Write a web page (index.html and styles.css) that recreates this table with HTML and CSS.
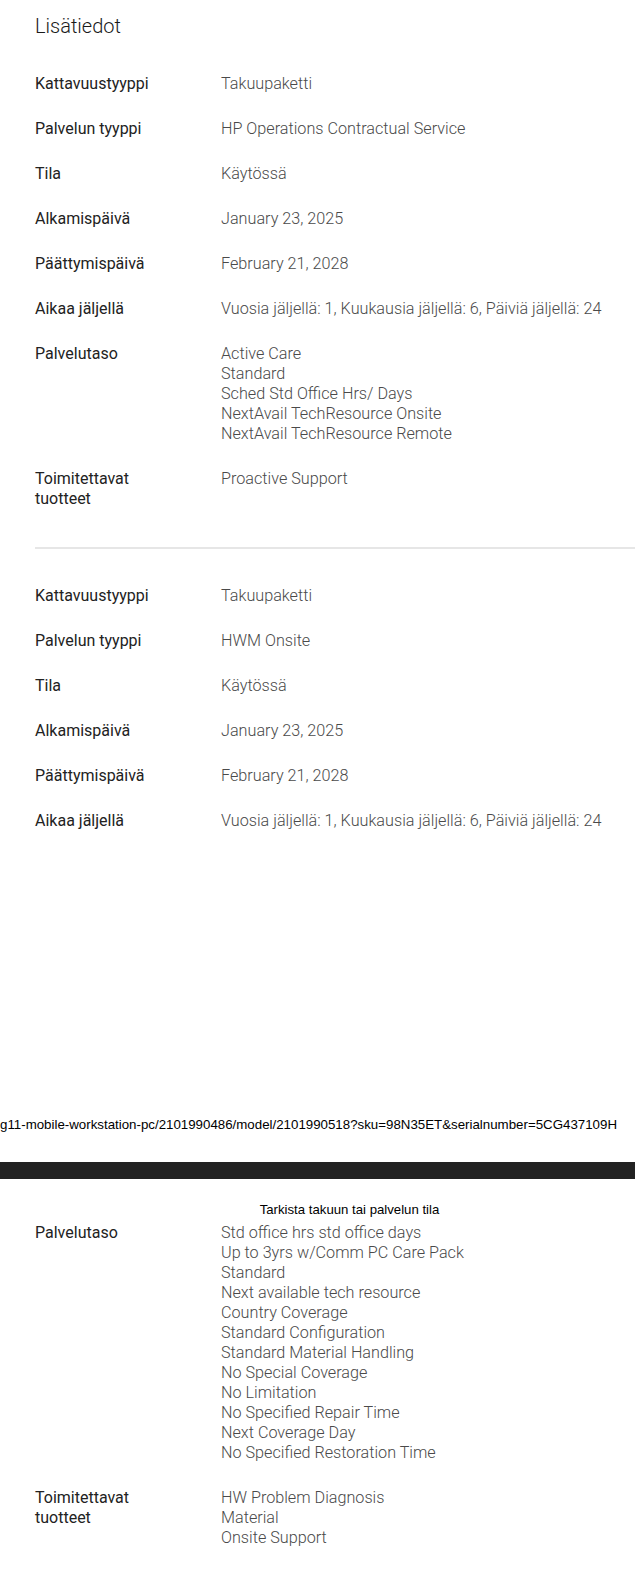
FILE: index.html
```html
<!DOCTYPE html>
<html lang="fi">
<head>
<meta charset="utf-8">
<title>Lisätiedot</title>
<link rel="stylesheet" href="styles.css">
</head>
<body>
<div class="page">
  <h1 class="title">Lisätiedot</h1>

  <dl class="group">
    <dt>Kattavuustyyppi</dt><dd>Takuupaketti</dd>
    <dt>Palvelun tyyppi</dt><dd>HP Operations Contractual Service</dd>
    <dt>Tila</dt><dd>Käytössä</dd>
    <dt>Alkamispäivä</dt><dd>January 23, 2025</dd>
    <dt>Päättymispäivä</dt><dd>February 21, 2028</dd>
    <dt>Aikaa jäljellä</dt><dd>Vuosia jäljellä: 1, Kuukausia jäljellä: 6, Päiviä jäljellä: 24</dd>
    <dt>Palvelutaso</dt><dd>Active Care<br>Standard<br>Sched Std Office Hrs/ Days<br>NextAvail TechResource Onsite<br>NextAvail TechResource Remote</dd>
    <dt>Toimitettavat<br>tuotteet</dt><dd>Proactive Support</dd>
  </dl>

  <hr class="divider">

  <dl class="group">
    <dt>Kattavuustyyppi</dt><dd>Takuupaketti</dd>
    <dt>Palvelun tyyppi</dt><dd>HWM Onsite</dd>
    <dt>Tila</dt><dd>Käytössä</dd>
    <dt>Alkamispäivä</dt><dd>January 23, 2025</dd>
    <dt>Päättymispäivä</dt><dd>February 21, 2028</dd>
    <dt>Aikaa jäljellä</dt><dd>Vuosia jäljellä: 1, Kuukausia jäljellä: 6, Päiviä jäljellä: 24</dd>
  </dl>
</div>

<div class="print-footer">g11-mobile-workstation-pc/2101990486/model/2101990518?sku=98N35ET&amp;serialnumber=5CG437109H</div>
<div class="dark-bar"></div>
<div class="print-header">Tarkista takuun tai palvelun tila</div>

<div class="page">
  <dl class="group group-cont">
    <dt>Palvelutaso</dt><dd>Std office hrs std office days<br>Up to 3yrs w/Comm PC Care Pack<br>Standard<br>Next available tech resource<br>Country Coverage<br>Standard Configuration<br>Standard Material Handling<br>No Special Coverage<br>No Limitation<br>No Specified Repair Time<br>Next Coverage Day<br>No Specified Restoration Time</dd>
    <dt>Toimitettavat<br>tuotteet</dt><dd>HW Problem Diagnosis<br>Material<br>Onsite Support</dd>
  </dl>
</div>
</body>
</html>
```

FILE: styles.css
```css
html, body {
  margin: 0;
  padding: 0;
  background: #ffffff;
}

body {
  font-family: Roboto, "Liberation Sans", sans-serif;
  color: #1f1f1f;
}

.page {
  padding-left: 35px;
}

.title {
  margin: 14px 0 36px;
  font-size: 20px;
  line-height: 24px;
  font-weight: 300;
  color: #1a1a1a;
}

.group {
  display: grid;
  grid-template-columns: 186px 1fr;
  row-gap: 25px;
  margin: 0;
  font-size: 16px;
  line-height: 20px;
}

.group dt {
  margin: 0;
  color: #222222;
  font-weight: 400;
}

.group dd {
  margin: 0;
  color: #4a4a4a;
  font-weight: 300;
  font-size: 16.2px;
}

.divider {
  margin: 38px 0 37px;
  border: 0;
  height: 2px;
  background: #e6e6e6;
}

.print-footer {
  margin-top: 286px;
  font-family: "Liberation Sans", Arial, sans-serif;
  font-size: 13.3px;
  line-height: 16px;
  color: #000;
  white-space: nowrap;
}

.dark-bar {
  margin-top: 29px;
  height: 17px;
  background: #222222;
}

.print-header {
  margin-top: 23px;
  text-align: center;
  font-family: "Liberation Sans", Arial, sans-serif;
  font-size: 13.2px;
  line-height: 16px;
  color: #000;
  padding-left: 64px;
}

.group-cont {
  margin-top: 5px;
}
```
